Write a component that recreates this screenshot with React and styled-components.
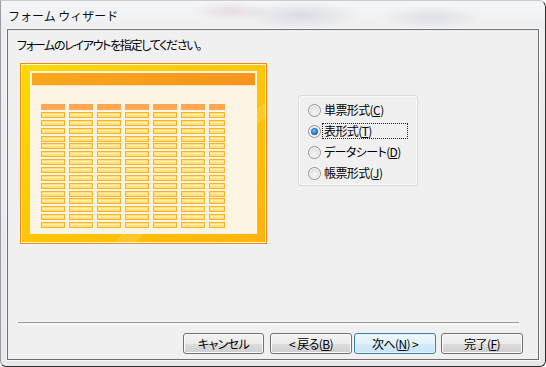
import React from 'react';
import styled, { createGlobalStyle } from 'styled-components';

const GlobalStyle = createGlobalStyle`
  html, body {
    margin: 0;
    padding: 0;
    background: #ffffff;
  }
  body {
    font-family: "Noto Sans CJK JP", "Noto Sans", sans-serif;
    font-size: 12px;
    color: #000;
  }
`;

const Window = styled.div`
  width: 546px;
  height: 367px;
  box-sizing: border-box;
  display: flex;
  flex-direction: column;
  padding: 0 6px 6px 6px;
  border: 1px solid #2e2e2e;
  border-top-color: #c9ccd0;
  border-left-color: #9a9ea3;
  border-radius: 0 7px 6px 6px;
  background:
    radial-gradient(ellipse 60px 14px at 300px 14px, rgba(190,195,205,0.45), transparent),
    radial-gradient(ellipse 40px 10px at 230px 10px, rgba(200,150,170,0.25), transparent),
    radial-gradient(ellipse 50px 12px at 430px 16px, rgba(185,190,200,0.35), transparent),
    linear-gradient(to bottom, #f5f6f7 0px, #eceef0 30px, #e6e8eb 100%);
`;

const TitleBar = styled.div`
  height: 28px;
  display: flex;
  align-items: center;
  padding-left: 1px;
  font-size: 12px;
  color: #111;
  text-shadow: 0 0 6px rgba(255,255,255,0.9);
`;

const Client = styled.div`
  flex: 1;
  display: flex;
  flex-direction: column;
  background: #f0f0f0;
  border: 1px solid #6e6e6e;
  box-shadow: 0 0 0 1px rgba(255,255,255,0.7);
`;

const Prompt = styled.div`
  margin-top: 8px;
  padding-left: 9px;
  line-height: 14px;
  font-size: 12px;
  letter-spacing: -1.3px;
  font-feature-settings: "palt";
`;

const Body = styled.div`
  display: flex;
  align-items: flex-start;
  margin-top: 11px;
  padding-left: 12px;
`;

const Preview = styled.svg`
  display: block;
  flex: none;
`;

const GroupBox = styled.div`
  margin-left: 30px;
  margin-top: 32px;
  width: 120px;
  height: 91px;
  box-sizing: border-box;
  padding: 3px 0 0 9px;
  border: 1px solid #d5dbe0;
  border-radius: 3px;
  box-shadow: inset 0 0 0 1px #fafafa;
`;

const Option = styled.div`
  display: flex;
  align-items: center;
  height: 21px;
`;

const RadioDot = styled.span`
  position: relative;
  flex: none;
  width: 11px;
  height: 11px;
  margin-top: 2px;
  border-radius: 50%;
  border: 1px solid #8f9396;
  background: radial-gradient(circle at 50% 60%, #f6f6f6 0%, #e2e2e2 55%, #cfcfcf 100%);
  box-shadow: inset 0 0 0 1px #fbfbfb;

  &::after {
    content: "";
    display: ${(p) => (p.$checked ? 'block' : 'none')};
    position: absolute;
    left: 2px;
    top: 2px;
    width: 7px;
    height: 7px;
    border-radius: 50%;
    background: radial-gradient(circle at 45% 40%, #6dc6ff 0%, #1f73c0 55%, #123f72 100%);
  }
`;

const OptionLabel = styled.span`
  margin-left: 1px;
  width: 86px;
  height: 16px;
  line-height: 14px;
  padding-left: 1px;
  box-sizing: border-box;
  font-size: 12px;
  letter-spacing: -0.6px;
  font-feature-settings: "palt";
  border: 1px dotted ${(p) => (p.$focused ? '#222' : 'transparent')};
  white-space: nowrap;
`;

const Key = styled.span`
  text-decoration: underline;
`;

const Footer = styled.div`
  margin-top: auto;
  display: flex;
  flex-direction: column;
`;

const Separator = styled.div`
  margin: 0 19px 0 10px;
  height: 1px;
  border-top: 1px solid #a0a0a0;
  border-bottom: 1px solid #ffffff;
`;

const ButtonRow = styled.div`
  display: flex;
  justify-content: flex-end;
  margin: 8px 15px 5px 0;
`;

const Button = styled.button`
  width: ${(p) => p.$w || 82}px;
  height: 21px;
  margin-left: ${(p) => p.$space || 0}px;
  padding: 0;
  font-family: "Noto Sans CJK JP", "Noto Sans", sans-serif;
  font-size: 12px;
  letter-spacing: -0.6px;
  font-feature-settings: "palt";
  color: #000;
  line-height: 17px;
  border-radius: 3px;
  border: 1px solid ${(p) => (p.$primary ? '#3c7fb1' : '#707070')};
  box-shadow: inset 0 0 0 1px ${(p) => (p.$primary ? '#e4f4fc' : '#fcfcfc')};
  background: ${(p) =>
    p.$primary
      ? 'linear-gradient(to bottom, #eef7fd 0%, #e2f2fc 50%, #d3ebfa 51%, #c8e5f8 100%)'
      : 'linear-gradient(to bottom, #f2f2f2 0%, #ebebeb 50%, #dddddd 51%, #cfcfcf 100%)'};
`;

const columns = [0, 1, 2, 3, 4, 5, 6];
const rows = Array.from({ length: 15 }, (_, i) => i);

function LayoutPreview() {
  return (
    <Preview width="248" height="181" viewBox="0 0 248 181">
      <defs>
        <linearGradient id="frameG" x1="0" y1="0" x2="1" y2="1">
          <stop offset="0" stopColor="#ffd900" />
          <stop offset="1" stopColor="#fbb30f" />
        </linearGradient>
        <linearGradient id="barG" x1="0" y1="0" x2="1" y2="0">
          <stop offset="0" stopColor="#f9a71c" />
          <stop offset="1" stopColor="#f7951d" />
        </linearGradient>
      </defs>
      <rect x="0.5" y="0.5" width="246" height="180" fill="url(#frameG)" stroke="#f28a1b" />
      <rect x="1.5" y="1.5" width="244" height="178" fill="none" stroke="#fffbe8" strokeOpacity="0.9" />
      <g stroke="#ffffff" strokeOpacity="0.25" strokeWidth="1.2">
        {[0, 3, 6, 9, 12, 15, 18].map((d) => (
          <line key={'s' + d} x1={96 + d} y1="180" x2={104 + d} y2="171" />
        ))}
        {[0, 3, 6, 9, 12].map((d) => (
          <line key={'r' + d} x1="237" y1={48 + d} x2="246" y2={40 + d} />
        ))}
      </g>
      <rect x="10.5" y="8.5" width="226" height="162" fill="#fdf5e3" stroke="#fff6e2" />
      <rect x="12" y="10" width="223" height="12" fill="url(#barG)" />
      <rect x="12" y="22" width="223" height="1" fill="#fbe3b8" />
      {columns.map((c) => {
        const x = 21 + c * 28;
        const w = c === 6 ? 16 : 24;
        return (
          <g key={c}>
            <rect x={x} y="41" width={w} height="6" fill="#ffa752" />
            {rows.map((r) => {
              const y = Math.round(49 + r * 7.86);
              return (
                <g key={r}>
                  <rect x={x} y={y} width={w} height="6" fill="#f8b12e" />
                  <rect x={x + 1} y={y + 1} width={w - 2} height="4" fill="#ffe37a" />
                  <rect x={x + 2} y={y + 2} width={w - 4} height="1" fill="#fff1b5" />
                </g>
              );
            })}
          </g>
        );
      })}
    </Preview>
  );
}

const options = [
  { text: '単票形式', key: 'C' },
  { text: '表形式', key: 'T', checked: true },
  { text: 'データシート', key: 'D' },
  { text: '帳票形式', key: 'J' },
];

export default function App() {
  return (
    <>
      <GlobalStyle />
      <Window>
        <TitleBar>フォーム ウィザード</TitleBar>
        <Client>
          <Prompt>フォームのレイアウトを指定してください。</Prompt>
          <Body>
            <LayoutPreview />
            <GroupBox>
              {options.map((o) => (
                <Option key={o.key}>
                  <RadioDot $checked={o.checked} />
                  <OptionLabel $focused={o.checked}>
                    {o.text}(<Key>{o.key}</Key>)
                  </OptionLabel>
                </Option>
              ))}
            </GroupBox>
          </Body>
          <Footer>
            <Separator />
            <ButtonRow>
              <Button $w={81}>キャンセル</Button>
              <Button $space={6}>
                &lt; 戻る(<Key>B</Key>)
              </Button>
              <Button $space={2} $primary>
                次へ(<Key>N</Key>) &gt;
              </Button>
              <Button $space={5}>
                完了(<Key>F</Key>)
              </Button>
            </ButtonRow>
          </Footer>
        </Client>
      </Window>
    </>
  );
}
